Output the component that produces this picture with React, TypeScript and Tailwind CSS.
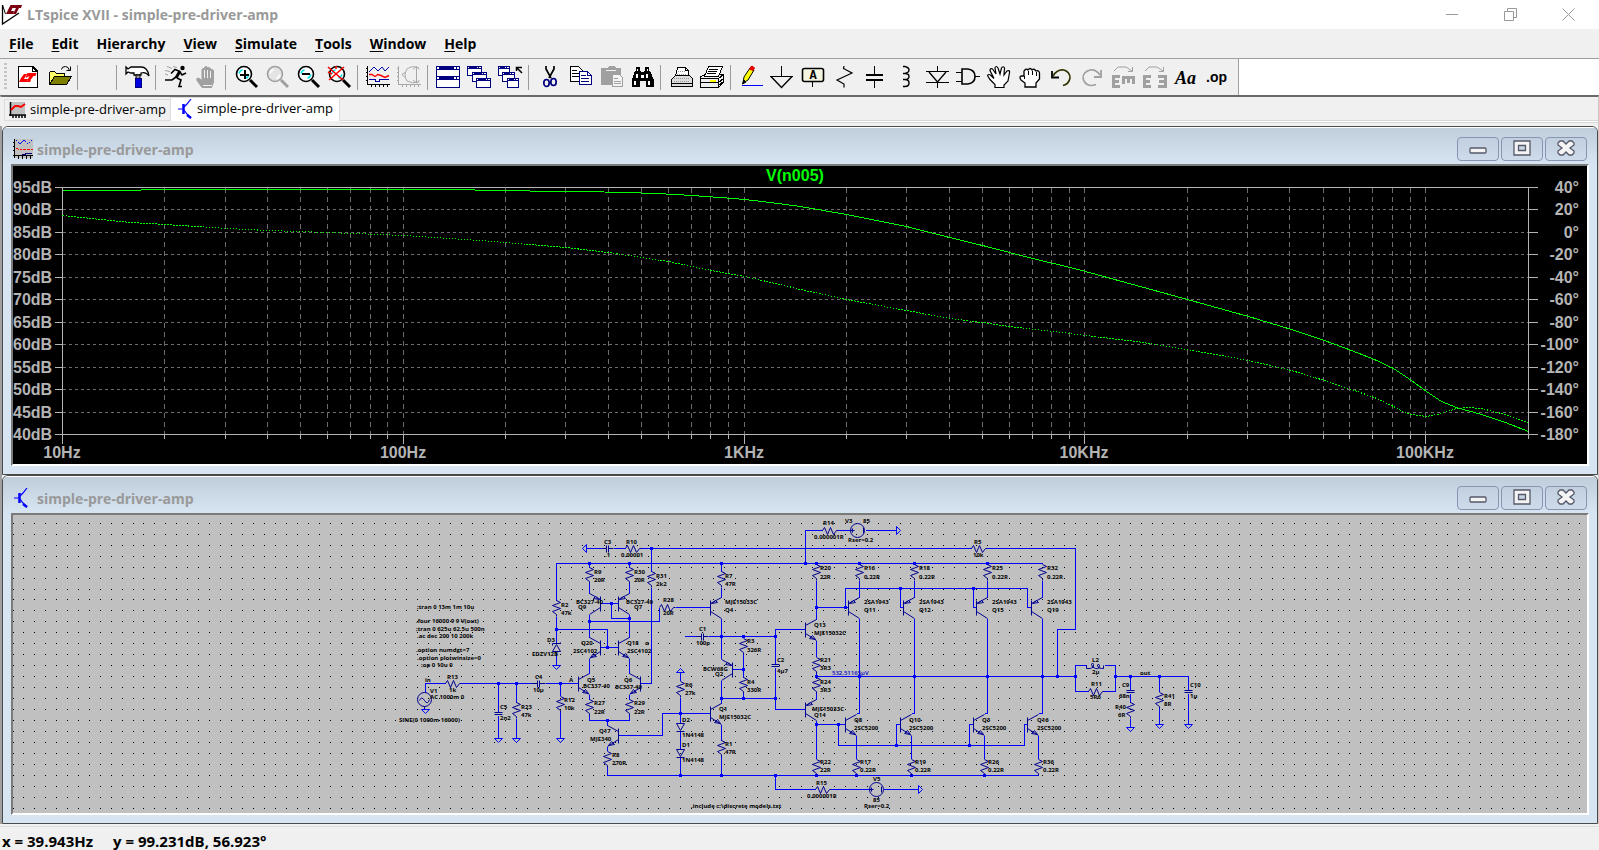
import React from 'react';

const UI_FONT = "font-['Open_Sans','Noto_Sans',sans-serif]";

type Point = [number, number];

/* ---------- toolbar icons, all on a 25x24 box ---------- */

function Icon({ children }: { children?: React.ReactNode }) {
  return (
    <svg width="25" height="24" viewBox="0 0 25 24" fill="none" stroke="#000" strokeWidth="1" shapeRendering="crispEdges" aria-hidden="true">
      {children}
    </svg>
  );
}

function Lens({ gray = false, children }: { gray?: boolean; children?: React.ReactNode }) {
  const ink = gray ? '#a0a0a0' : '#000';
  return (
    <Icon>
      <g shapeRendering="auto">
        <circle cx="10" cy="9" r="7.5" fill={gray ? '#e4e4e4' : '#fff'} stroke={ink} strokeWidth="1.6" />
        <path d="M16 15l7 7" stroke={ink} strokeWidth="3" />
        <path d="M5 8.5q.8-3 3.500-3.800M15 9.500q-.8 3-3.500 3.800" stroke={gray ? '#fff' : '#00e5f0'} strokeWidth="1.500" />
      </g>
      {children}
    </Icon>
  );
}

function MiniWindow({ x, y, w, h }: { x: number; y: number; w: number; h: number }) {
  return (
    <g stroke="none">
      <rect x={x} y={y} width={w} height={h} fill="#000080" />
      <rect x={x + 1} y={y + 3} width={w - 2} height={h - 4} fill="#fff" />
      <rect x={x + 1} y={y + 1} width="1" height="1" fill="#fff" />
      <rect x={x + w - 5} y={y + 1} width="1" height="1" fill="#fff" />
      <rect x={x + w - 3} y={y + 1} width="2" height="1" fill="#fff" />
    </g>
  );
}

const icons: Record<string, React.ReactNode> = {
  'New schematic': (
    <Icon>
      <path d="M2.500 1.500h14l5 5v16h-19z" fill="#fff" strokeWidth="1.500" />
      <path d="M16.500 1.500v5h5" />
      <g stroke="none" shapeRendering="auto">
        <path d="M3 17l2-4 3-4h3l-3 5h4l-1 3zM9.500 13l4-2-2 4h3l3-4h2l1-3h-9zM12 15h3l-1 2h-3z" fill="#f00" />
      </g>
    </Icon>
  ),
  Open: (
    <Icon>
      <path d="M2.500 19.500v-12l1-1h4l2 2h8v3" fill="#ffff66" />
      <path d="M2.500 19.500l5-8h17l-5 8z" fill="#808000" />
      <path d="M14.500 4.500q0-3 4-3 3 0 4 4M19.500 5.500h4v-4" shapeRendering="auto" />
    </Icon>
  ),
  'Control panel': (
    <Icon>
      <g shapeRendering="auto">
        <path d="M1 2l2 2 3-2h10c4 0 7 3 8 9-2-3-5-4-8-3v2H9V8H6L3 7 1 9z" fill="#fff" strokeWidth="1.300" />
        <path d="M11 10h4v4h-4z" fill="#9a9a9a" />
      </g>
      <path d="M10 13h6v9h-6z" fill="#0000e0" stroke="#000080" />
    </Icon>
  ),
  Run: (
    <Icon>
      <g shapeRendering="auto">
        <path d="M3 1.500l5 2M1 5.500l5 1M9 1.500l4 1M1 9l3 1" stroke="#a0a0a0" />
        <circle cx="18.500" cy="3" r="2.200" fill="#000" stroke="none" />
        <path d="M16 6l-4 7" strokeWidth="3" />
        <path d="M16 6.500l-5-2-4 4M16 7l2 3 4-2M13 13l4 2-2 6.500h3M12 12l-4 3H1" strokeWidth="1.600" />
      </g>
    </Icon>
  ),
  Halt: (
    <Icon>
      <path
        d="M7 22.500l-5-7c-1-2 1-3 2-2l3 2V5c0-2 2.500-2 2.500 0v-2c0-2 3-2 3 0v1c0-2 3-2 3 0v2c0-2 3-2 3 0v11l-2 5.500z"
        fill="#a0a0a0"
        stroke="#a0a0a0"
        shapeRendering="auto"
      />
      <path d="M9.500 5v8M12.500 5v8M15.500 6v7M8 20.500h9" stroke="#f0f0f0" />
    </Icon>
  ),
  'Zoom in': (
    <Lens>
      <path d="M6 9.500h9M10.500 5v9" strokeWidth="2" />
    </Lens>
  ),
  Pan: <Lens gray />,
  'Zoom back': (
    <Lens>
      <path d="M6 9h8" strokeWidth="2" />
    </Lens>
  ),
  'Zoom to fit': (
    <Lens>
      <path d="M1 2l15 13M17 2L2 15M1 7l4 2M9 1v3" stroke="#f00" strokeWidth="1.600" shapeRendering="auto" />
    </Lens>
  ),
  'Autorange Y': (
    <Icon>
      <path d="M1.500 1v19M1 19.500h23M0 3.500h2M0 7.500h2M0 11.500h2M0 15.500h2M5.500 20v2M9.500 20v2M13.500 20v2M17.500 20v2M21.500 20v2" />
      <g shapeRendering="auto">
        <path d="M3 7l5-5 4 4 4-4 3 4 4-4" stroke="#0000a0" />
        <path d="M3 9.500l3 0 3 2 3-2 3 1 4 2 4-2" stroke="#f00" strokeWidth="1.400" />
      </g>
      <path d="M3 14.500h6v2h4v-2h10" stroke="#0000a0" />
    </Icon>
  ),
  'Plot settings': (
    <Icon>
      <g stroke="#a8a8a8">
        <path d="M1.500 1v19M1 19.500h23M0 3.500h2M0 7.500h2M0 11.500h2M0 15.500h2M5.500 20v2M9.500 20v2M13.500 20v2M17.500 20v2M21.500 20v2" />
        <path d="M22 3q-7-3-12 1-4 6 0 12 5 3 12 1M19.500 2v16M16 4.500l3.500-3 3 3M16 15l3.500 3 3-3M5 9.500l3-2M5 9.500l3 3" shapeRendering="auto" />
      </g>
    </Icon>
  ),
  'Tile windows': (
    <Icon>
      <g stroke="none">
        <rect x="0" y="1" width="24" height="22" fill="#000080" />
        <rect x="1" y="5" width="22" height="6" fill="#fff" />
        <rect x="1" y="15" width="22" height="7" fill="#fff" />
        <path d="M1 2h2v2H1zM18 2h2v2h-2zM21 2h2v2h-2zM1 12h2v2H1zM18 12h2v2h-2zM21 12h2v2h-2z" fill="#fff" />
      </g>
    </Icon>
  ),
  'Cascade windows': (
    <Icon>
      <MiniWindow x={0} y={1} w={15} h={10} />
      <MiniWindow x={5} y={7} w={15} h={10} />
      <MiniWindow x={9} y={13} w={15} h={10} />
    </Icon>
  ),
  'Close all windows': (
    <Icon>
      <MiniWindow x={0} y={1} w={12} h={10} />
      <MiniWindow x={4} y={7} w={13} h={10} />
      <MiniWindow x={9} y={13} w={12} h={10} />
      <path d="M18.500 6V2.500H24M19 3l5 5" strokeWidth="1.500" shapeRendering="auto" />
    </Icon>
  ),
  Cut: (
    <Icon>
      <g shapeRendering="auto">
        <path d="M9 1v3l5 9M17 1v3l-5 9" strokeWidth="1.700" />
        <ellipse cx="9.500" cy="18" rx="2.700" ry="3.500" stroke="#000080" strokeWidth="1.700" />
        <ellipse cx="16.500" cy="17" rx="2.700" ry="3.500" stroke="#000080" strokeWidth="1.700" />
      </g>
    </Icon>
  ),
  Copy: (
    <Icon>
      <path d="M2.500 1.500h8l4 4v11h-12z" fill="#fff" />
      <path d="M4 5.500h5M4 8.500h8M4 11.500h8" />
      <path d="M11.500 6.500h8l4 4v9h-12z" fill="#fff" stroke="#000080" />
      <path d="M19.500 6.500v4h4M13 10.500h5M13 13.500h8M13 16.500h8" stroke="#000080" />
    </Icon>
  ),
  Paste: (
    <Icon>
      <path d="M2 4q0-1 1-1h5l2-2h5l2 2h4q1 0 1 1v16H2z" fill="#a0a0a0" stroke="none" />
      <path d="M7 5.500h10" stroke="#f0f0f0" />
      <path d="M13.500 9.500h7l3 3v9h-10z" fill="#f4f4f4" stroke="#a0a0a0" />
      <path d="M15 13.500h4M15 16.500h7M15 18.500h7" stroke="#a0a0a0" />
    </Icon>
  ),
  Find: (
    <Icon>
      <path d="M6 2h4v3l1 2h3l1-2V2h4v3l2 3 3 7v7h-8v-6h-6v6H2v-7l2-7 2-3z" fill="#000" stroke="none" />
      <path d="M7 4h1v2H7zM17 4h1v2h-1zM6 9h2v4H6zM16 9h2v4h-2zM4 16h2v4H4zM18 16h2v4h-2zM11 10h3v3h-3z" fill="#fff" stroke="none" />
    </Icon>
  ),
  Print: (
    <Icon>
      <path d="M8.500 2.500h8l3 3v6h-13z" fill="#fff" />
      <path d="M2.500 14.500l4-4h14l3 3v8h-21z" fill="#ddd" />
      <path d="M9 6.500h7M8 9.500h10M5 13.500h15M5 16.500h15" stroke="#999" strokeDasharray="1 1" />
      <path d="M16.500 2.500v3h3M2.500 18.500h21" />
    </Icon>
  ),
  'Print setup': (
    <Icon>
      <path d="M0.500 11.500l5-2h18v8l-5 5h-18z" fill="#eee" />
      <path d="M8.500 1.500h14l-4 10h-14z" fill="#fff" />
      <path d="M9 4.500h9M8 6.500h9M7 8.500h9M0.500 13.500h18v8M18.500 13.500l5-4M0.500 17.500h18l5-4M18.500 20.500l5-4" />
      <path d="M10 15h6v2h-6z" fill="#ffff00" stroke="none" />
    </Icon>
  ),
  'Draw wire': (
    <Icon>
      <g shapeRendering="auto">
        <path d="M4 18l1-6 6-9 4 2-6 10z" fill="#ffff00" />
        <path d="M10.500 4l1.500-2.500q2-1 3.500 1.500l-1.500 2.500z" fill="#f00" stroke="#c00" />
        <path d="M3.500 19l1.500-4 2 2z" fill="#000" />
      </g>
      <path d="M3 20.500h21" stroke="#0000ff" />
    </Icon>
  ),
  'Place ground': (
    <Icon>
      <path d="M11.500 1v10M0 11.500h23" strokeWidth="1.400" />
      <path d="M1 11.500l10.500 11 10.500-11" strokeWidth="1.400" shapeRendering="auto" />
    </Icon>
  ),
  'Label net': (
    <Icon>
      <rect x="1.500" y="3.500" width="21" height="13" rx="2" fill="#f4f4e0" strokeWidth="1.600" shapeRendering="auto" />
      <path d="M11.500 17v5" />
      <text x="12" y="14" textAnchor="middle" fontFamily="'Liberation Mono', monospace" fontWeight="700" fontSize="12" fill="#000" stroke="none">
        A
      </text>
    </Icon>
  ),
  'Place resistor': (
    <Icon>
      <path d="M12 1l-.5 2.500L20 8 5 15l7 4v3.500" strokeWidth="1.200" shapeRendering="auto" />
    </Icon>
  ),
  'Place capacitor': (
    <Icon>
      <path d="M11.500 1v8M11.500 16v7" />
      <path d="M3 10h17M3 15h17" strokeWidth="2" />
    </Icon>
  ),
  'Place inductor': (
    <Icon>
      <path d="M9 1.500h2q4 1 4 3.500t-4 3.500H9h2q4 0 4 3t-4 3H9h2q4 0 4 3.500t-4 3.500H9" strokeWidth="1.400" shapeRendering="auto" />
    </Icon>
  ),
  'Place diode': (
    <Icon>
      <path d="M12.500 1v6M12.500 17v6M1 6.500h23M1 17.500h23" strokeWidth="1.400" />
      <path d="M4 7l8.500 10L21 7" strokeWidth="1.300" shapeRendering="auto" />
    </Icon>
  ),
  'Place component': (
    <Icon>
      <path d="M0 7.500h6M0 16.500h6M19 11.500h5" strokeWidth="1.400" />
      <path d="M6 4h6q7 1 7 7.500T12 19H6z" strokeWidth="1.600" shapeRendering="auto" />
    </Icon>
  ),
  Move: (
    <Icon>
      <path
        d="M8 22.500v-3l-5-5-2.500-4q1-2 3.500 0l3 3L3 5.500q0-2.500 2.500-1.500L9 9 8 3q1-3 3 0l2 6 1.500-6q2-2.500 3 0L17 10l3-4q3-1 2.500 1.500L21 16l-4 4v2.500z"
        fill="#fff"
        strokeWidth="1.200"
        shapeRendering="auto"
      />
    </Icon>
  ),
  Drag: (
    <Icon>
      <path
        d="M7 22v-4l-4-3q-2-3 0-4l3 0V6q2-3 4-1 2-3 4 0 2-2 4 1 3-1 3.500 2v6L18 18v4z"
        fill="#fff"
        strokeWidth="1.300"
        shapeRendering="auto"
      />
      <path d="M10.500 6v4M14.500 6v4M18.500 7v4M6.500 11v3" />
    </Icon>
  ),
  Undo: (
    <Icon>
      <g shapeRendering="auto">
        <path d="M4 11q4-7 11-6 6 2 6 8-1 6-7 7.500" strokeWidth="1.600" stroke="#333300" />
        <path d="M3 6v6.500h7" strokeWidth="1.800" />
      </g>
    </Icon>
  ),
  Redo: (
    <Icon>
      <g shapeRendering="auto" stroke="#a0a0a0">
        <path d="M20 10q-4-6-10-5-7 2-7 8 1 6 7 7.500 4 0 6-1" strokeWidth="1.600" />
        <path d="M21 5v7h-7" strokeWidth="1.800" />
      </g>
    </Icon>
  ),
  Rotate: (
    <Icon>
      <path d="M3 6l4-4h8l6 4M21.500 2v4.500H17" stroke="#a0a0a0" shapeRendering="auto" />
      <path d="M2 10v13M2 11.500h7M2 16.500h6M2 21.500h7M11 12.500h13M12.500 12v7M17.500 12v6M22.500 12v7" stroke="#a0a0a0" strokeWidth="3" />
    </Icon>
  ),
  Mirror: (
    <Icon>
      <path d="M3 6l4-4h8l6 4M21.500 2v4.500H17" stroke="#a0a0a0" shapeRendering="auto" />
      <path d="M2 10v13M2 11.500h7M2 16.500h6M2 21.500h7M23 10v13M16 11.500h7M17 16.500h6M16 21.500h7" stroke="#a0a0a0" strokeWidth="3" />
    </Icon>
  ),
};

const toolbarGroups: string[][] = [
  ['New schematic', 'Open'],
  ['Save'],
  ['Control panel'],
  ['Run', 'Halt'],
  ['Zoom in', 'Pan', 'Zoom back', 'Zoom to fit'],
  ['Autorange Y', 'Plot settings'],
  ['Tile windows', 'Cascade windows', 'Close all windows'],
  ['Cut', 'Copy', 'Paste', 'Find'],
  ['Print', 'Print setup'],
  [
    'Draw wire', 'Place ground', 'Label net', 'Place resistor', 'Place capacitor', 'Place inductor', 'Place diode',
    'Place component', 'Move', 'Drag', 'Undo', 'Redo', 'Rotate', 'Mirror', 'Text', 'Directive',
  ],
];

function ToolButton({ name }: { name: string }) {
  return (
    <button type="button" aria-label={name} className="flex h-6 w-[31px] items-center justify-center">
      {name === 'Text' && <span className="pt-0.5 font-['Liberation_Serif',serif] text-lg font-bold italic leading-6">Aa</span>}
      {name === 'Directive' && <span className="font-['Liberation_Sans',sans-serif] text-sm font-bold leading-5">.op</span>}
      {icons[name]}
    </button>
  );
}

function Toolbar() {
  return (
    <div className="flex border-t border-t-[#a0a0a0] bg-white">
      <div role="toolbar" aria-label="Main toolbar" className="flex h-9 items-center border-r border-[#a0a0a0] bg-[#f0f0f0] pr-1.5">
        <div className="ml-1 mr-1.5 h-7 w-[3px] bg-[repeating-linear-gradient(to_bottom,#c4c4c4_0_2px,transparent_2px_4px)]" />
        {toolbarGroups.map((group, i) => (
          <React.Fragment key={i}>
            {i > 0 && (
              <div className="w-2 pl-0.5">
                <div className="h-[25px] w-px bg-[#9a9a9a]" />
              </div>
            )}
            {group.map((name) => (
              <ToolButton key={name} name={name} />
            ))}
          </React.Fragment>
        ))}
      </div>
    </div>
  );
}

/* ---------- title, menu, tabs ---------- */

function TitleBar() {
  return (
    <header className="flex h-[29px] items-center bg-white">
      <svg width="22" height="22" viewBox="0 0 22 22" className="ml-px mr-1" aria-hidden="true">
        <path d="M1.500 1v19L18 9" fill="none" stroke="#000" strokeWidth="1.300" />
        <path d="M5 10L9.500 1H13L10 7h3l-1 3zM12 1h9l-1 3h-2l-3 6h-3l3-6h-4z" fill="#7a0010" />
        <path d="M1.500 1l3 9" stroke="#000" />
      </svg>
      <h1 className="flex-1 text-sm font-bold text-[#999]">LTspice XVII - simple-pre-driver-amp</h1>
      <div className="flex pr-0.5 text-[#999]">
        <button type="button" aria-label="Minimize" className="flex w-[58px] justify-center">
          <svg width="13" height="13" viewBox="0 0 13 13" stroke="currentColor"><path d="M0 6.500h12" /></svg>
        </button>
        <button type="button" aria-label="Restore" className="flex w-[58px] justify-center">
          <svg width="13" height="13" viewBox="0 0 13 13" fill="none" stroke="currentColor">
            <path d="M.5 3.500h9v9h-9zM3.500 3V.5h9v9H10" />
          </svg>
        </button>
        <button type="button" aria-label="Close" className="flex w-[58px] justify-center">
          <svg width="13" height="13" viewBox="0 0 13 13" stroke="currentColor"><path d="M.5.5l12 12M12.500.5l-12 12" /></svg>
        </button>
      </div>
    </header>
  );
}

// [text before the access key, access key, rest]
const menus = [
  ['', 'F', 'ile'],
  ['', 'E', 'dit'],
  ['H', 'i', 'erarchy'],
  ['', 'V', 'iew'],
  ['', 'S', 'imulate'],
  ['', 'T', 'ools'],
  ['', 'W', 'indow'],
  ['', 'H', 'elp'],
];

function MenuBar() {
  return (
    <nav className="flex h-[29px] items-center bg-[#f0f0f0]">
      {menus.map(([pre, key, rest]) => (
        <button key={pre + key + rest} type="button" className="px-[9px] text-sm font-bold text-black">
          {pre}
          <span className="underline underline-offset-2">{key}</span>
          {rest}
        </button>
      ))}
    </nav>
  );
}

function TransistorIcon() {
  return (
    <svg width="16" height="20" viewBox="0 0 16 20" fill="none" stroke="#0000ff" aria-hidden="true">
      <path d="M1 10h5M7 8l3-3 4-5M7 11l3 4 4 4" strokeWidth="1.200" />
      <path d="M6.500 5v10M10 16l4 3" strokeWidth="2.500" />
    </svg>
  );
}

function PlotIcon() {
  return (
    <svg width="20" height="20" viewBox="0 0 20 20" fill="none" shapeRendering="crispEdges" aria-hidden="true">
      <rect x="1" width="19" height="19" fill="#c0c0c0" />
      <path d="M1.500 0v19M0 16.500h20M0 3.500h2M0 7.500h2M0 11.500h2M5.500 16v4M9.500 16v4M13.500 16v4M17.500 16v4" stroke="#000" />
      <path d="M3 1l4 4 4-4 4 4 4-4" stroke="#0000ff" strokeDasharray="2 1" />
      <path d="M3 9l4 2 5-1 4 1 4-1" stroke="#f00" strokeDasharray="3 1" />
      <path d="M9 15h3v-1h7" stroke="#000080" />
    </svg>
  );
}

function TraceIcon() {
  return (
    <svg width="17" height="16" viewBox="0 0 17 16" fill="none" aria-hidden="true">
      <rect x="2" width="14" height="12" fill="#c0c0c0" />
      <path d="M1.500 0v14M0 13h17M4 13v3M7 13v3M10 13v3M13 13v3M16 13v3" stroke="#000" strokeWidth="1.500" />
      <path d="M2 8l4-4h3l3 1 4-3" stroke="#f00" strokeWidth="2" />
    </svg>
  );
}

function Tabs() {
  return (
    <div role="tablist" className="flex h-[29px] items-start border-b border-[#f0f0f0] bg-[#f0f0f0] pl-1 text-[13px] text-black">
      <button type="button" role="tab" className="mt-0.5 flex h-[22px] items-center gap-1 border border-r-0 border-[#dcdcdc] px-1">
        <TraceIcon />
        simple-pre-driver-amp
      </button>
      <button type="button" role="tab" aria-selected="true" className="flex h-6 items-center gap-1 border border-b-0 border-[#dcdcdc] bg-white px-1.5 pb-1 pt-0.5">
        <TransistorIcon />
        simple-pre-driver-amp
      </button>
      <div className="mt-[23px] h-[3px] flex-1 border-y border-[#d8d8d8] bg-white" />
    </div>
  );
}

/* ---------- child windows ---------- */

function CaptionButton({ label, children }: { label: string; children: React.ReactNode }) {
  return (
    <button
      type="button"
      aria-label={label}
      className="flex h-6 w-[42px] items-center justify-center rounded-sm border border-[#8894b2] bg-linear-to-b from-[#c2cfde] to-[#cddbea]"
    >
      <svg width="20" height="18" viewBox="0 0 20 18" fill="#f4f4f4" stroke="#55586a" strokeWidth="1.300" aria-hidden="true">
        {children}
      </svg>
    </button>
  );
}

function ChildWindow({ title, icon, children }: { title: string; icon: React.ReactNode; children: React.ReactNode }) {
  return (
    <section className="overflow-hidden rounded-t-md border border-[#4a4a4a] bg-[#d7e4f2] px-2 pb-2">
      <div className="-mx-2 flex h-[37px] items-center border-t border-white bg-linear-to-b from-[#c0cddb] to-[#d7e4f2] px-2 pt-1.5">
        <span className="ml-0.5 mr-1 w-5">{icon}</span>
        <h2 className="flex-1 pt-0.5 text-sm font-bold text-[#999]">{title}</h2>
        <div className="mr-0.5 flex gap-0.5">
          <CaptionButton label="Minimize">
            <rect x="2" y="8" width="16" height="5" rx="1" />
          </CaptionButton>
          <CaptionButton label="Maximize">
            <path d="M2 1h16v14H2zM6.500 5.500v5h7v-5z" fillRule="evenodd" />
          </CaptionButton>
          <CaptionButton label="Close">
            <path d="M2 3l2-2h3l3 3 3-3h3l2 2v2l-4 3 4 3v2l-2 2h-3l-3-3-3 3H4l-2-2v-2l4-3-4-3z" />
          </CaptionButton>
        </div>
      </div>
      <div className="border-2 border-b-white border-l-[#7a7a7a] border-r-white border-t-[#7a7a7a]">{children}</div>
    </section>
  );
}

/* ---------- bode plot ---------- */

const PLOT_LEFT = 62;
const PLOT_TOP = 187;
const PLOT_BOTTOM = 434;
const PLOT_RIGHT = 1528;
const DECADE = 340.8;

const gainTrace =
  '62,190 140,190 141,189 474,189 475,190 582,191 625,192 655,193 676,194 691,195 705,196 720,197 744,199 770,202 800,206 846,214 906,226 949,237 982,245 1009,252 1032,258 1053,263 1070,267 1085,271 1187,299 1248,316 1291,329 1324,340 1351,350 1374,359 1393,368 1411,380 1426,391 1441,401 1456,407 1481,414 1505,422 1528,431';
const phaseTrace =
  '62,215 91,218 130,222 165,224 226,228 267,230 327,232 403,235 465,239 505,242 565,247 608,252 641,257 668,261 691,266 711,270 744,276 784,285 800,289 846,299 906,310 949,318 982,322 1009,326 1053,331 1085,335 1136,341 1187,349 1248,360 1291,370 1324,380 1351,389 1374,397 1393,406 1402,411 1411,414 1426,416 1441,413 1456,408 1467,407 1481,408 1505,414 1528,422';

const rowYs = Array.from({ length: 12 }, (_, i) => Math.floor(PLOT_TOP + i * 22.5));
const columns: { x: number; major: boolean }[] = [];
for (let d = 0; d < 5; d++) {
  for (let m = 1; m < 10; m++) {
    const x = Math.floor(PLOT_LEFT + 0.4 + (d + Math.log10(m)) * DECADE);
    if (x < PLOT_RIGHT - 1) columns.push({ x, major: m === 1 });
  }
}

function BodePlot() {
  return (
    <svg viewBox="13 166 1574 298" className="block h-auto w-full bg-black" role="img" aria-label="V(n005) frequency response">
      <g transform="translate(.5 .5)" fill="none" strokeWidth="1" shapeRendering="crispEdges">
        <g stroke="#6c6c6c">
          {rowYs.slice(1, -1).map((y) => (
            <path key={y} d={`M${PLOT_LEFT} ${y}H${PLOT_RIGHT}`} strokeDasharray="3 3" />
          ))}
          {columns.slice(1).map(({ x }) => (
            <path key={x} d={`M${x} ${PLOT_TOP}V${PLOT_BOTTOM}`} strokeDasharray="5 4" />
          ))}
        </g>
        <g stroke="#b4b4b4">
          <path d={`M54 ${PLOT_TOP}H1537M54 ${PLOT_BOTTOM}H1537M${PLOT_LEFT} ${PLOT_TOP}V443M${PLOT_RIGHT} ${PLOT_TOP}V438`} />
          {rowYs.slice(1, -1).map((y) => (
            <path key={y} d={`M54 ${y}h8M${PLOT_RIGHT} ${y}h9`} />
          ))}
          {columns.map(({ x, major }) => (
            <path key={x} d={`M${x} ${PLOT_BOTTOM}v${major ? 9 : 4}`} />
          ))}
        </g>
        <polyline points={gainTrace} stroke="#00ff00" />
        <polyline points={phaseTrace} stroke="#00ff00" strokeDasharray="1.500 1.500" />
      </g>
      <g fill="#b4b4b4" fontFamily="'Liberation Sans', sans-serif" fontSize="16" fontWeight="700">
        {rowYs.map((y, i) => (
          <React.Fragment key={y}>
            <text x="13" y={y + 6}>{95 - i * 5}dB</text>
            <text x="1579" y={y + 6} textAnchor="end">{40 - i * 20}°</text>
          </React.Fragment>
        ))}
        {['10Hz', '100Hz', '1KHz', '10KHz', '100KHz'].map((label, i) => (
          <text key={label} x={Math.round(PLOT_LEFT + i * DECADE)} y="458" textAnchor="middle">{label}</text>
        ))}
        <text x="795" y="181" textAnchor="middle" fill="#00ff00">V(n005)</text>
      </g>
    </svg>
  );
}

/* ---------- schematic ---------- */

// resistors and transistors sit on top of the wires, so the wires stop at their pins
const wires = [
  'M586 548H602M613 548H625M639 548H971M986 548H1075V629H1057V676',
  'M556 600V563H1042M556 616V643M556 652V665M556 629H607V647',
  'M589 582V593M629 582V593M589 563V567M629 563V567M600 603H618M611 603V618H629',
  'M589 614V637M629 614V637M589 621H659V607M675 607H710M600 647H618',
  'M589 658V673M629 658V673M651 548V571M651 587V683H640',
  'M589 694V699M629 694V699M589 714V720H629V714M607 720V725M618 735H662V713H710',
  'M607 746V750M607 766V775H1038V774',
  'M425 692V683H445M460 683H531M545 683H578M498 683V711M498 715V738M516 683V702M516 718V738M560 683V695M560 711V738',
  'M680 672V680M680 697V723M680 731V749M680 757V775',
  'M721 563V571M721 587V597M721 618V658M684 636H696M708 636H775M743 653V677M743 692V698M732 669H743',
  'M721 680V703M721 698H775M721 724V740M721 755V775',
  'M775 664V629H805M775 667V709H805',
  'M816 580V619M816 640V656M816 672V678M816 692V699M816 720V758M816 607H848M845 607V588H1027V607H1031',
  'M900 588V607H903M973 588V607H976',
  'M859 580V597M914 580V597M987 580V597M1042 580V597',
  'M859 618V713H856M914 618V713H911M987 618V713H984M1042 618V713H1038',
  'M816 676H1075M816 724H845M838 724V745H1024V724H1027M896 745V724H900M969 745V724H973',
  'M856 735V758M911 735V758M984 735V758M1038 735V758',
  'M805 563V530H822M837 530H851M865 530H896M775 775V789H815M829 789H869M883 789H918',
  'M1075 676V665H1086M1104 665H1115V691H1103M1075 676V691H1088M1115 676H1188V690',
  'M1130 676V690M1130 693V702M1130 718V727M1159 676V691M1159 707V724M1188 693V724',
];

const nodes: Point[] = [
  [651, 548], [589, 563], [629, 563], [721, 563], [805, 563], [816, 563], [859, 563], [914, 563], [987, 563],
  [556, 629], [611, 603], [629, 618], [589, 621], [607, 647], [498, 683], [516, 683], [560, 683], [607, 720],
  [680, 713], [680, 775], [721, 775], [775, 775], [816, 775], [856, 775], [911, 775], [984, 775],
  [721, 636], [743, 636], [775, 636], [743, 669], [721, 698], [743, 698], [775, 698],
  [816, 607], [845, 607], [900, 588], [973, 588], [838, 724], [816, 724], [896, 745], [969, 745],
  [816, 676], [859, 676], [914, 676], [987, 676], [1042, 676], [1057, 676], [1075, 676],
  [1115, 676], [1130, 676], [1159, 676],
];

// top pin of each upright resistor
const resistors: Point[] = [
  [589, 567], [629, 567], [651, 571], [556, 600], [589, 699], [629, 699], [607, 751], [516, 702], [560, 696],
  [680, 681], [721, 571], [743, 638], [743, 677], [721, 740], [816, 564], [859, 564], [914, 564], [987, 564],
  [1042, 564], [816, 657], [816, 677], [816, 759], [856, 759], [911, 759], [984, 759], [1038, 759],
  [1130, 702], [1159, 692],
];

// left pin of each lying resistor
const flatResistors: Point[] = [[625, 548], [971, 548], [659, 607], [445, 683], [822, 530], [815, 789], [1088, 691]];

interface Transistor {
  x: number; // collector/emitter pin column
  y: number; // base row
  dir: 1 | -1; // 1 when the base is left of the pins
  pnp?: boolean;
}

const transistors: Transistor[] = [
  { x: 589, y: 603, dir: -1, pnp: true },
  { x: 629, y: 603, dir: 1, pnp: true },
  { x: 589, y: 647, dir: -1 },
  { x: 629, y: 647, dir: 1 },
  { x: 589, y: 683, dir: 1 },
  { x: 629, y: 683, dir: -1 },
  { x: 607, y: 735, dir: -1 },
  { x: 721, y: 607, dir: 1, pnp: true },
  { x: 721, y: 669, dir: -1, pnp: true },
  { x: 721, y: 713, dir: 1 },
  { x: 816, y: 629, dir: 1 },
  { x: 816, y: 709, dir: 1, pnp: true },
  { x: 859, y: 607, dir: 1, pnp: true },
  { x: 914, y: 607, dir: 1, pnp: true },
  { x: 987, y: 607, dir: 1, pnp: true },
  { x: 1042, y: 607, dir: 1, pnp: true },
  { x: 856, y: 724, dir: 1 },
  { x: 911, y: 724, dir: 1 },
  { x: 984, y: 724, dir: 1 },
  { x: 1038, y: 724, dir: 1 },
];

const grounds: Point[] = [[556, 665], [425, 709], [498, 738], [516, 738], [560, 738], [1130, 727], [1159, 724], [1188, 724]];

const labels: [number, number, string][] = [
  [417, 609, ';tran 0 13m 1m 10u'],
  [416, 623, '.four 16000 9 9 V(out)'],
  [416, 631, ';tran 0 625u 62.5u 500n'],
  [417, 638, '.ac dec 200 10 200k'],
  [416, 652, '.option numdgt=7'],
  [417, 660, '.option plotwinsize=0'],
  [421, 667, ';op 0 10u 0'],
  [425, 682, 'in'], [430, 693, 'V1'], [430, 699, 'AC 1000m 0'], [399, 722, 'SINE(0 1000m 16000)'],
  [447, 679, 'R13'], [449, 692, '1k'], [500, 709, 'C5'], [500, 720, '2n2'], [521, 709, 'R23'], [521, 717, '47k'],
  [535, 679, 'C4'], [533, 692, '10µ'], [569, 682, 'A'], [564, 702, 'R12'], [564, 710, '10k'],
  [604, 544, 'C3'], [605, 557, '.1'], [626, 544, 'R10'], [621, 557, '0.00001'],
  [594, 574, 'R9'], [594, 582, '20R'], [634, 574, 'R30'], [634, 582, '20R'], [656, 578, 'R31'], [656, 586, '2k2'],
  [576, 604, 'BC327-40'], [578, 609, 'Q9'], [626, 604, 'BC327-40'], [634, 609, 'Q7'],
  [561, 607, 'R2'], [561, 615, '47k'], [663, 602, 'R28'], [663, 615, '20R'],
  [547, 642, 'D3'], [532, 656, 'EDZV12B'], [581, 645, 'Q20'], [573, 653, '2SC4102'],
  [627, 645, 'Q18'], [627, 653, '2SC4102'], [645, 645, 'α'],
  [587, 682, 'Q5'], [583, 688, 'BC337-40'], [624, 682, 'Q6'], [615, 689, 'BC337-40'],
  [594, 705, 'R27'], [594, 714, '22R'], [634, 705, 'R29'], [634, 714, '22R'],
  [599, 733, 'Q17'], [590, 741, 'MJE340'], [612, 757, 'R8'], [612, 765, '270R'],
  [823, 525, 'R14'], [814, 539, '0.000001R'], [845, 523, 'V3'], [863, 523, '85'], [848, 542, 'Rser=0.2'],
  [725, 578, 'R7'], [725, 586, '47R'], [725, 604, 'MJE15033C'], [725, 612, 'Q4'],
  [699, 631, 'C1'], [696, 645, '100p'], [747, 643, 'R3'], [747, 652, '326R'], [777, 662, 'C2'], [777, 673, '4µ7'],
  [703, 671, 'BCW68G'], [715, 676, 'Q2'], [747, 684, 'R4'], [747, 692, '330R'], [685, 687, 'R6'], [685, 695, '27k'],
  [719, 711, 'Q1'], [719, 719, 'MJE15032C'], [682, 722, 'D2'], [682, 737, '1N4148'], [682, 747, 'D1'], [682, 762, '1N4148'],
  [725, 746, 'R1'], [725, 754, '47R'],
  [820, 570, 'R20'], [820, 579, '22R'], [864, 570, 'R16'], [864, 579, '0.22R'], [919, 570, 'R18'], [919, 579, '0.22R'],
  [992, 570, 'R25'], [992, 579, '0.22R'], [1047, 570, 'R32'], [1047, 579, '0.22R'],
  [864, 604, '2SA1943'], [864, 612, 'Q11'], [919, 604, '2SA1943'], [919, 612, 'Q12'],
  [992, 604, '2SA1943'], [992, 612, 'Q15'], [1047, 604, '2SA1943'], [1047, 612, 'Q19'],
  [814, 627, 'Q13'], [814, 635, 'MJE15032C'], [820, 662, 'R21'], [820, 670, '3R3'], [820, 684, 'R24'], [820, 692, '3R3'],
  [812, 711, 'MJE15033C'], [814, 717, 'Q14'],
  [854, 722, 'Q8'], [854, 730, '2SC5200'], [909, 722, 'Q10'], [909, 730, '2SC5200'],
  [982, 722, 'Q3'], [982, 730, '2SC5200'], [1037, 722, 'Q16'], [1037, 730, '2SC5200'],
  [820, 764, 'R22'], [820, 772, '22R'], [860, 764, 'R17'], [860, 772, '0.22R'], [915, 764, 'R19'], [915, 772, '0.22R'],
  [988, 764, 'R26'], [988, 772, '0.22R'], [1043, 764, 'R36'], [1043, 772, '0.22R'],
  [816, 785, 'R15'], [807, 798, '0.000001R'], [873, 781, 'V5'], [873, 802, '85'], [864, 808, 'Rser=0.2'],
  [691, 808, '.include c:\\discrete models.txt'],
  [974, 544, 'R5'], [973, 557, '10k'], [1092, 662, 'L2'], [1092, 674, '2µ'], [1091, 686, 'R11'], [1090, 699, '5R6'],
  [1140, 675, 'out'], [1122, 687, 'C9'], [1119, 698, '68n'], [1115, 709, 'R40'], [1118, 717, '6R'],
  [1190, 687, 'C10'], [1190, 698, '1µ'], [1164, 698, 'R41'], [1164, 706, '8R'],
];

const GRID = 10.957;
let dots = '';
for (let row = 0; row < 27; row++) {
  for (let col = 0; col < 144; col++) {
    dots += `M${Math.max(13, Math.floor(12.5 + col * GRID))} ${Math.floor(523.3 + row * GRID)}h1v1h-1z`;
  }
}

function transistorPath({ x, y, dir, pnp }: Transistor) {
  const bar = x - dir * 11;
  const outline = `M${bar} ${y - 7}V${y + 8}M${bar} ${y - 4}L${x} ${y - 10}M${bar} ${y + 4}L${x} ${y + 11}`;
  const arrow = pnp
    ? `M${bar + dir} ${y - 4}l${dir * 6} -1l${dir * -2} -2z`
    : `M${x - dir} ${y + 10}l${dir * -6} -1l${dir * 3} -3z`;
  return outline + arrow;
}

function Schematic() {
  return (
    <svg viewBox="13 515 1574 298" className="block h-auto w-full bg-[#c0c0c0]" role="img" aria-label="simple-pre-driver-amp schematic">
      <path d={dots} fill="#000" shapeRendering="crispEdges" />
      <g transform="translate(.5 .5)" fill="none">
        <path d={wires.join('')} stroke="#0000ff" shapeRendering="crispEdges" />
        {nodes.map(([x, y]) => (
          <path key={`${x}-${y}`} d={`M${x - 1.5} ${y - 1.5}h3v3h-3z`} fill="#0000ff" shapeRendering="crispEdges" />
        ))}
        <g stroke="#000090">
          {resistors.map(([x, y]) => (
            <path key={`${x}-${y}`} d={`M${x} ${y}l4 2l-8 3l8 3l-8 3l4 3v2`} />
          ))}
          {flatResistors.map(([x, y]) => (
            <path key={`${x}-${y}`} d={`M${x} ${y}l2 -3l3 7l3 -7l3 7l3 -4h2`} />
          ))}
          {transistors.map((t) => (
            <path key={`${t.x}-${t.y}`} d={transistorPath(t)} />
          ))}
          {/* capacitors */}
          <path d="M602 548H606M608 548H613M606 545v7M608 545v7M531 683h6M539 683h6M537 680v7M539 680v7M696 636h5M703 636h5M701 633v7M703 633v7" />
          <path d="M494 712h8M494 714h8M771 664h8M771 666h8M1126 690h8M1126 692h8M1184 690h8M1184 692h8" />
          {/* diodes */}
          <path d="M552 651h8l-4-7zM552 645v-2h8v-1M676 723h8l-4 7zM676 731h8M676 749h8l-4 7zM676 757h8" />
          {/* sources */}
          <circle cx="424" cy="699" r="7" />
          <path d="M419 700q2-5 5 0t5-1M424 706v3" />
          <circle cx="857" cy="530" r="7" />
          <circle cx="876" cy="789" r="7" />
          <path d="M850 530h4M852 528v4M863 527v6M869 789h4M871 787v4M881 786v6" />
          {/* output inductor */}
          <path d="M1086 665v3h4q4-1 3-4t-2 0q0 3 4 4t4-3q-1-3-2 0 0 3 4 3h2v-3" />
        </g>
        <g stroke="#0000ff">
          {grounds.map(([x, y]) => (
            <path key={`${x}-${y}`} d={`M${x - 4} ${y}h8l-4 4z`} />
          ))}
          <path d="M586 544v8l-4-4zM676 672h8l-4-4zM896 526v8l4-4zM918 785v8l4-4z" />
        </g>
      </g>
      <g fontFamily="'Open Sans', 'Noto Sans', sans-serif" fontSize="6" fontWeight="700" fill="#000">
        {labels.map(([x, y, text]) => (
          <text key={`${x}-${y}`} x={x} y={y}>{text}</text>
        ))}
        <text x="832" y="675" fill="#0000c0" fontWeight="600">532.51165µV</text>
      </g>
    </svg>
  );
}

export default function App() {
  return (
    <div className={`min-h-screen bg-[#f0f0f0] ${UI_FONT}`}>
      <TitleBar />
      <MenuBar />
      <Toolbar />
      <main className="border-l-2 border-r border-t-2 border-l-[#a0a0a0] border-r-[#c8c8c0] border-t-[#696969]">
        <div className="-ml-0.5">
          <Tabs />
        </div>
        <ChildWindow title="simple-pre-driver-amp" icon={<PlotIcon />}>
          <BodePlot />
        </ChildWindow>
        <ChildWindow title="simple-pre-driver-amp" icon={<TransistorIcon />}>
          <Schematic />
        </ChildWindow>
      </main>
      <footer className="mt-0.5 flex h-6 items-center gap-5 border-t border-[#dcdcdc] px-0.5 pt-1 text-[15px] leading-5 font-bold text-black">
        <span>x = 39.943Hz</span>
        <span>y = 99.231dB, 56.923°</span>
      </footer>
    </div>
  );
}
